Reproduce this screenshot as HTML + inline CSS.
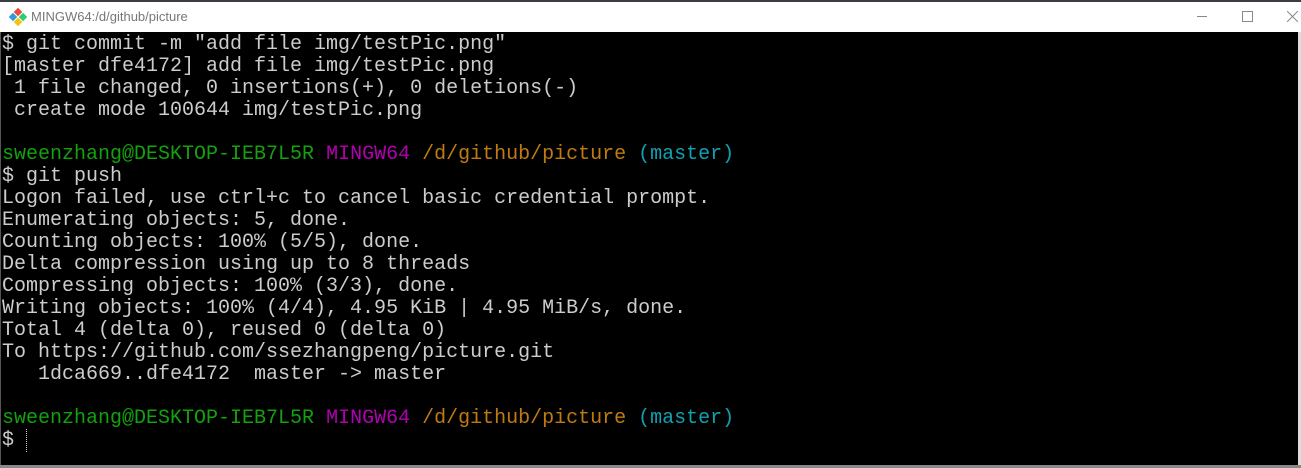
<!DOCTYPE html>
<html><head><meta charset="utf-8"><style>
html,body{margin:0;padding:0;width:1301px;height:468px;overflow:hidden;background:#fff}
.top{position:absolute;left:0;top:0;width:1301px;height:2px;background:#3a3d44}
.title{position:absolute;left:0;top:2px;width:1301px;height:30px;background:#fff}
.title .t{position:absolute;left:31px;top:7px;font:13px "Liberation Sans",sans-serif;color:#777}
.term{position:absolute;left:0;top:32px;width:1298px;height:433px;background:#000;border-left:1px solid #555}
.bot{position:absolute;left:0;top:465px;width:1301px;height:3px;background:#888}
.rs{position:absolute;left:1298px;top:32px;width:3px;height:433px;background:#ddd}
pre{margin:0;position:absolute;left:2px;top:34px;font:20px/22px "Liberation Mono",monospace;color:#cccccc}
.g{color:#13a10e}.m{color:#b000b0}.y{color:#c07a10}.c{color:#10a0b0}
</style></head><body>
<div class="top"></div>
<div class="title">
<svg style="position:absolute;left:9px;top:6px" width="18" height="18" viewBox="0 0 18 18">
<rect x="6" y="1" width="6" height="6" transform="rotate(45 9 4)" fill="#e74c3c"/>
<rect x="1" y="6" width="6" height="6" transform="rotate(45 4 9)" fill="#3498db"/>
<rect x="11" y="6" width="6" height="6" transform="rotate(45 14 9)" fill="#2ecc71"/>
<rect x="6" y="11" width="6" height="6" transform="rotate(45 9 14)" fill="#f1c40f"/>
</svg>
<span class="t">MINGW64:/d/github/picture</span>
<div style="position:absolute;left:1197px;top:14px;width:10px;height:1px;background:#888"></div>
<div style="position:absolute;left:1242px;top:9px;width:9px;height:9px;border:1px solid #888"></div>
<svg style="position:absolute;left:1287px;top:9px" width="11" height="11"><path d="M0 0L11 11M11 0L0 11" stroke="#888" stroke-width="1"/></svg>
</div>
<div class="term"></div>
<div class="rs"></div>
<div class="bot"></div>
<pre>$ git commit -m "add file img/testPic.png"
[master dfe4172] add file img/testPic.png
 1 file changed, 0 insertions(+), 0 deletions(-)
 create mode 100644 img/testPic.png

<span class="g">sweenzhang@DESKTOP-IEB7L5R</span> <span class="m">MINGW64</span> <span class="y">/d/github/picture</span> <span class="c">(master)</span>
$ git push
Logon failed, use ctrl+c to cancel basic credential prompt.
Enumerating objects: 5, done.
Counting objects: 100% (5/5), done.
Delta compression using up to 8 threads
Compressing objects: 100% (3/3), done.
Writing objects: 100% (4/4), 4.95 KiB | 4.95 MiB/s, done.
Total 4 (delta 0), reused 0 (delta 0)
To https://github.com/ssezhangpeng/picture.git
   1dca669..dfe4172  master -&gt; master

<span class="g">sweenzhang@DESKTOP-IEB7L5R</span> <span class="m">MINGW64</span> <span class="y">/d/github/picture</span> <span class="c">(master)</span>
$ <span style="border-left:1px dotted #ccc"></span></pre>
</body></html>
